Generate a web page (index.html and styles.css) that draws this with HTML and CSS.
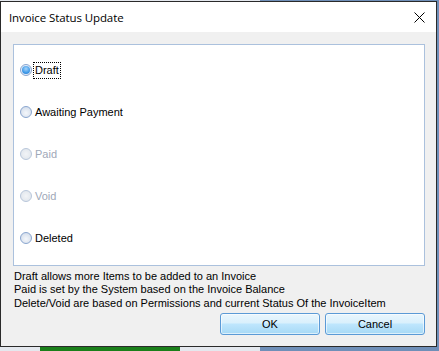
FILE: index.html
```html
<!DOCTYPE html>
<html lang="en">
<head>
  <meta charset="UTF-8">
  <title>Invoice Status Update</title>
  <link rel="stylesheet" href="styles.css">
</head>
<body>
  <div class="desk">
    <div class="window">
      <div class="titlebar">
        <span class="title">Invoice Status Update</span>
        <svg class="close" width="11" height="11" viewBox="0 0 11 11">
          <path d="M0.5 0.5 L10.5 10.5 M10.5 0.5 L0.5 10.5" stroke="#000" stroke-width="1" fill="none"/>
        </svg>
      </div>
      <div class="content">
        <div class="panel">
          <label class="option">
            <span class="radio checked"></span>
            <span class="text focus">Draft</span>
          </label>
          <label class="option">
            <span class="radio"></span>
            <span class="text">Awaiting Payment</span>
          </label>
          <label class="option disabled">
            <span class="radio"></span>
            <span class="text">Paid</span>
          </label>
          <label class="option disabled">
            <span class="radio"></span>
            <span class="text">Void</span>
          </label>
          <label class="option">
            <span class="radio"></span>
            <span class="text">Deleted</span>
          </label>
        </div>
        <div class="notes">
          <div>Draft allows more Items to be added to an Invoice</div>
          <div>Paid is set by the System based on the Invoice Balance</div>
          <div>Delete/Void are based on Permissions and current Status Of the InvoiceItem</div>
        </div>
        <div class="buttons">
          <button class="btn">OK</button>
          <button class="btn">Cancel</button>
        </div>
      </div>
    </div>
    <div class="taskbit"></div>
  </div>
</body>
</html>
```
FILE: styles.css
```css
body{
  margin: 0;
  background: #c9d3de;
  font-family: "Liberation Sans", Arial, sans-serif;
  font-size: 11px;
  color: #000;
}
.desk{
  height: 351px;
  padding-top: 1px;
  box-sizing: border-box;
  overflow: hidden;
  background: linear-gradient(to right, #e4e8ee 0, #e4e8ee 260px, #6f8fb8 260px);
}
.window{
  width: 435px;
  height: 344px;
  border: 1px solid #2a2a2a;
  background: #f0f0f0;
}
.titlebar{
  height: 30px;
  background: #fff;
  display: flex;
  align-items: center;
  justify-content: space-between;
  padding: 0 11px 0 8px;
}
.title{
  font-family: "Open Sans", sans-serif;
  font-size: 11.5px;
  color: #000;
  letter-spacing: -0.1px;
  padding-top: 1px;
}
.close{
  display: block;
}
.content{
  padding: 12px 11px 0 12px;
}
.panel{
  height: 203px;
  width: 410px;
  background: #fff;
  border: 1px solid #abc1dd;
  padding-top: 17px;
}
.option{
  display: flex;
  align-items: center;
  height: 16px;
  margin-bottom: 26px;
  padding-left: 6px;
}
.radio{
  width: 10px;
  height: 10px;
  border-radius: 50%;
  border: 1px solid #8aa6cf;
  background: radial-gradient(circle at 50% 60%, #f4f7fb 0, #dfe6f0 55%, #c9d6e8 100%);
  margin-right: 1px;
  position: relative;
}
.radio.checked{
  background: radial-gradient(circle, #ffffff 0, #d6e4f7 100%);
}
.radio.checked::after{
  content: "";
  position: absolute;
  left: 1px;
  top: 1px;
  width: 8px;
  height: 8px;
  border-radius: 50%;
  background: radial-gradient(circle at 50% 35%, #a6d4fb 0, #3f9ae8 60%, #2472c8 100%);
}
.text{
  padding: 1px 1px;
  line-height: 13px;
  border: 1px solid transparent;
}
.text.focus{
  border: 1px dotted #000;
}
.disabled .text{
  color: #a0a8b8;
}
.disabled .radio{
  border-color: #b8c6da;
  background: radial-gradient(circle, #f2f4f7 0, #dde3ea 100%);
}
.notes{
  margin-top: 4px;
  line-height: 13.3px;
  padding-left: 1px;
}
.buttons{
  display: flex;
  justify-content: flex-end;
  gap: 5px;
  margin-top: 3px;
}
.btn{
  width: 100px;
  height: 22px;
  border: 1px solid #5b9ad6;
  border-radius: 3px;
  background: linear-gradient(to bottom, #eaf6fd 0, #d9f0fc 45%, #bee6fd 50%, #a7d9f5 100%);
  font-family: "Liberation Sans", Arial, sans-serif;
  font-size: 11px;
  color: #000;
  padding: 0;
  box-shadow: inset 0 0 0 1px rgba(255,255,255,0.6);
}
.taskbit{
  width: 140px;
  height: 4px;
  margin-left: 40px;
  background: #1a7f1a;
}
```
